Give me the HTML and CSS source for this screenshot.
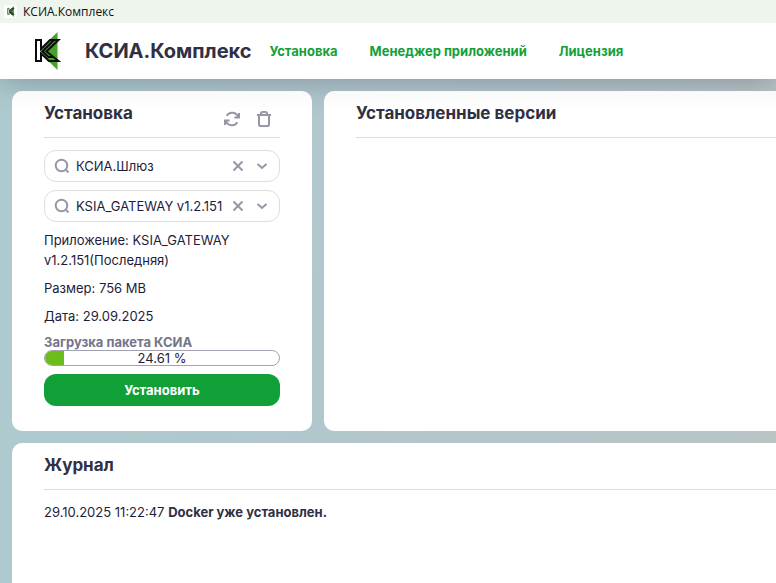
FILE: index.html
```html
<!DOCTYPE html>
<html lang="ru">
<head>
<meta charset="utf-8">
<title>КСИА.Комплекс</title>
<link rel="stylesheet" href="styles.css">
</head>
<body>
<svg class="defs" aria-hidden="true">
  <symbol id="logo" viewBox="0 0 27 38">
    <path fill="#45a32b" d="M23.500 0v38L4 19z"/>
    <path fill="#fff" d="M2 8h5v21H2z"/>
    <path fill="none" stroke="#0b0b0b" stroke-width="2" d="M2 8h5v9l9-9h8.500L12.500 19.500l12 9.500H15l-8-7.500V29H2z"/>
    <path fill="none" stroke="#0b0b0b" stroke-width="2" d="M20 8L8.500 19.500l6 5.500h5"/>
  </symbol>
  <symbol id="search" viewBox="0 0 16 16"><circle cx="7.500" cy="7.500" r="5.800"/><path d="M12 12l2.500 2.500"/></symbol>
  <symbol id="cross" viewBox="0 0 16 16"><path d="M3.500 3.500l9 9M12.500 3.500l-9 9"/></symbol>
  <symbol id="chevron" viewBox="0 0 16 16"><path d="M3.500 6l4.500 4 4.500-4"/></symbol>
</svg>

<div class="titlebar">
  <span class="app-icon"><svg><use href="#logo"/></svg></span>
  <span>КСИА.Комплекс</span>
</div>

<header class="header">
  <svg class="logo"><use href="#logo"/></svg>
  <h1 class="brand">КСИА.Комплекс</h1>
  <nav class="nav">
    <a href="#install">Установка</a>
    <a href="#manager">Менеджер приложений</a>
    <a href="#license">Лицензия</a>
  </nav>
</header>

<main class="main">
  <section class="card install" id="install">
    <div class="card-head">
      <h2>Установка</h2>
      <div class="tools">
        <button type="button" aria-label="Обновить"><svg class="icon" viewBox="0 0 16 16"><path d="M14.200 6.500A6.400 6.400 0 0 0 2.600 4.800M1.800 9.500a6.400 6.400 0 0 0 11.600 1.700M15 2v4.600h-4.600M1 14V9.400h4.600"/></svg></button>
        <button type="button" aria-label="Удалить"><svg class="icon" viewBox="0 0 16 16"><path d="M1 4h14M5 4V2.500Q5 1 6.500 1h3Q11 1 11 2.500V4M3 4v9.500Q3 15 4.500 15h7q1.500 0 1.500-1.500V4"/></svg></button>
      </div>
    </div>
    <form class="form">
      <div class="combo">
        <svg class="icon"><use href="#search"/></svg>
        <input type="text" aria-label="Приложение" value="КСИА.Шлюз">
        <button type="button" aria-label="Очистить"><svg class="icon"><use href="#cross"/></svg></button>
        <button type="button" aria-label="Открыть список"><svg class="icon"><use href="#chevron"/></svg></button>
      </div>
      <div class="combo">
        <svg class="icon"><use href="#search"/></svg>
        <input type="text" aria-label="Версия" value="KSIA_GATEWAY v1.2.151">
        <button type="button" aria-label="Очистить"><svg class="icon"><use href="#cross"/></svg></button>
        <button type="button" aria-label="Открыть список"><svg class="icon"><use href="#chevron"/></svg></button>
      </div>
      <p>Приложение: KSIA_GATEWAY v1.2.151(Последняя)</p>
      <p>Размер: 756 MB</p>
      <p>Дата: 29.09.2025</p>
      <div class="download">
        <span class="download-label" id="download-label">Загрузка пакета КСИА</span>
        <div class="progress" role="progressbar" aria-labelledby="download-label" aria-valuenow="24.61">
          <span class="progress-fill"></span>
          <span class="progress-text">24.61 %</span>
        </div>
      </div>
      <button class="submit" type="button">Установить</button>
    </form>
  </section>

  <section class="card versions">
    <div class="card-head"><h2>Установленные версии</h2></div>
  </section>

  <section class="card journal">
    <div class="card-head"><h2>Журнал</h2></div>
    <p class="log"><time>29.10.2025 11:22:47</time> <strong>Docker уже установлен.</strong></p>
  </section>
</main>
</body>
</html>
```
FILE: styles.css
```css
* { box-sizing: border-box; }
body {
  margin: 0;
  min-height: 100vh;
  display: flex;
  flex-direction: column;
  font: 13px/20px Inter, "Noto Sans", sans-serif;
  color: #1d1d3b;
  background: linear-gradient(100deg, #adcbcf, #b3c6cc 60%, #b9c4c4);
}
h1, h2, p { margin: 0; }
button { padding: 0; border: 0; background: none; font: inherit; color: inherit; cursor: pointer; }
.defs { position: absolute; width: 0; height: 0; }

.titlebar {
  position: relative;
  z-index: 1;
  display: flex;
  align-items: center;
  gap: 6px;
  height: 23px;
  padding-left: 4px;
  background: #eef5ec;
  color: #111;
  font: 12px/16px "Open Sans", "Noto Sans", sans-serif;
}
.app-icon { display: flex; justify-content: center; align-items: center; width: 13px; height: 13px; border-radius: 3px; background: #fff; }
.app-icon svg { width: 8px; height: 11px; }

.header {
  display: flex;
  align-items: center;
  height: 56px;
  padding-left: 34px;
  background: #fff;
  box-shadow: 0 4px 30px rgba(60, 60, 80, 0.35);
}
.logo { width: 27px; height: 38px; margin-right: 24px; }
.brand { margin-right: 18px; font-size: 20px; line-height: 28px; font-weight: 700; color: #303044; }
.nav { display: flex; gap: 32px; }
.nav a { color: #13a038; font-weight: 700; text-decoration: none; white-space: nowrap; }

.main {
  flex: 1;
  display: grid;
  grid-template-columns: 300px 1fr;
  grid-template-rows: auto 1fr;
  gap: 12px;
  padding: 12px 0 0 12px;
}
.card { padding: 12px 32px 25px; border-radius: 10px; background: linear-gradient(#f9f9fa, #fff 20px); }
.versions { padding-right: 0; border-radius: 10px 0 0 10px; }
.journal { grid-column: 1 / -1; padding-right: 0; border-radius: 10px 0 0 0; background: #fff; }
.card-head { display: flex; justify-content: space-between; height: 35px; border-bottom: 1px solid #dedee0; }
.card-head h2 { font-size: 17px; line-height: 20px; font-weight: 700; color: #303044; white-space: nowrap; }
.tools { display: flex; align-items: flex-end; gap: 16px; padding: 0 8px 10px 0; }
.tools button { height: 16px; }

.icon { display: block; flex: none; width: 16px; height: 16px; fill: none; stroke: #9696a6; stroke-width: 2; }
.form { display: flex; flex-direction: column; gap: 8px; padding-top: 12px; }
.combo {
  display: flex;
  align-items: center;
  gap: 8px;
  height: 32px;
  padding: 0 9px;
  border: 1px solid #dedee0;
  border-radius: 12px;
}
.combo input { flex: 1; min-width: 0; padding: 0; border: 0; outline: 0; background: none; font: inherit; color: inherit; margin-right: -4px; margin-left: -2px; }
.download { display: flex; flex-direction: column; }
.download-label { height: 16px; line-height: 16px; font-weight: 700; color: #74748a; }
.progress {
  display: grid;
  height: 16px;
  overflow: hidden;
  border: 1px solid #a2a2b2;
  border-radius: 8px;
  line-height: 14px;
  text-align: center;
}
.progress span { grid-area: 1 / 1; }
.progress-fill { width: 19px; background: #6cbd1b; }
.submit { height: 32px; border-radius: 12px; background: #119f38; color: #fff; font-weight: 700; }
.log { padding-top: 12px; }
.log strong { font-weight: 700; color: #303044; }
```
